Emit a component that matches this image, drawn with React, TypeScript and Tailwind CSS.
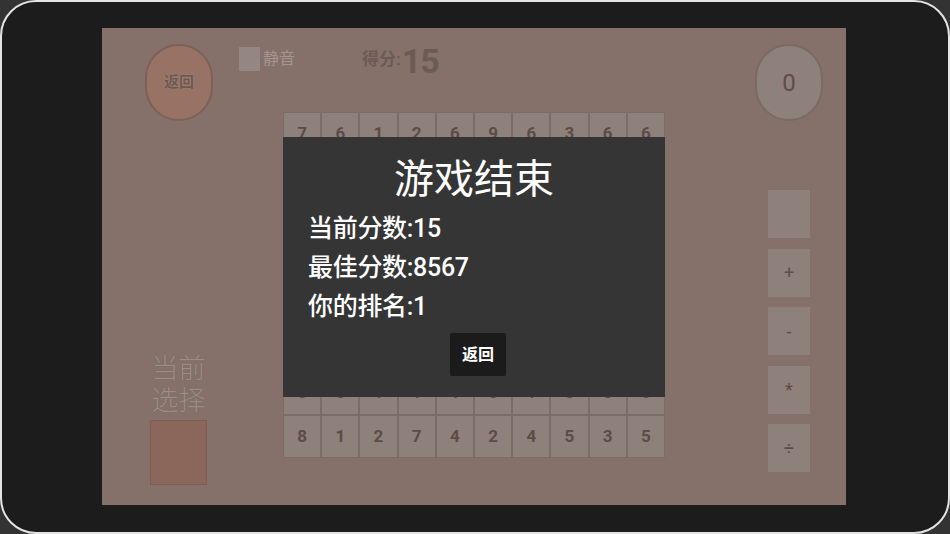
import React from "react";

// number board: 8 rows x 10 cols; rows under the result dialog are left blank
const board: (number | null)[][] = [
  [7, 6, 1, 2, 6, 9, 6, 3, 6, 6],
  Array(10).fill(null),
  Array(10).fill(null),
  Array(10).fill(null),
  Array(10).fill(null),
  Array(10).fill(null),
  [6, 6, 1, 1, 1, 6, 1, 6, 6, 6],
  [8, 1, 2, 7, 4, 2, 4, 5, 3, 5],
];

const ops = ["", "+", "-", "*", "÷"];

const stats = [
  { label: "当前分数", value: "15" },
  { label: "最佳分数", value: "8567" },
  { label: "你的排名", value: "1" },
];

function Tile({ n }: { n: number | null }) {
  return (
    <div className="flex items-center justify-center border border-[#7c6c66] bg-[#8e807b] text-[17px] font-bold text-[#5c4c46]">
      {n}
    </div>
  );
}

function ResultDialog() {
  return (
    <div className="absolute left-[181px] top-[109px] flex h-[260px] w-[382px] flex-col bg-[#353535] text-white">
      <p className="mt-[19px] text-center text-[40px] leading-[48px] font-normal">游戏结束</p>
      <div className="mt-[5px] flex flex-col pl-[25px]">
        {stats.map((s) => (
          <p key={s.label} className="text-[25px] leading-[39px] font-medium tracking-[-0.3px]">
            {s.label}:{s.value}
          </p>
        ))}
      </div>
      <div className="mt-[7px] flex justify-center pl-[8px]">
        <button
          type="button"
          className="h-[43px] w-[56px] rounded-[2px] bg-[#1b1b1b] text-[16px] font-bold text-white"
        >
          返回
        </button>
      </div>
    </div>
  );
}

export default function App() {
  return (
    <div className="h-[534px] w-[950px] bg-[#333333] font-['Roboto','Noto_Sans_CJK_SC',sans-serif]">
      <div className="h-full rounded-[36px] border-2 border-[#e4e4e4] bg-[#1c1c1c] pl-[100px] pt-[26px]">
        <div className="relative flex h-[477px] w-[744px] flex-col bg-[#857169]">
          {/* top bar */}
          <div className="flex items-start pl-[43px] pr-[23px] pt-[16px]">
            <button
              type="button"
              className="flex h-[77px] w-[68px] items-center justify-center rounded-full border-2 border-[#7c6157] bg-[#987365] text-[15px] font-bold text-[#6b5850] [text-shadow:0_0_1px_#b39c92]"
            >
              返回
            </button>
            <div className="ml-[26px] mt-[3px] flex items-center gap-[3px]">
              <span className="h-[24px] w-[21px] bg-[#948682]" />
              <span className="text-[16px] font-normal text-[#a3958f]">静音</span>
            </div>
            <div className="ml-[67px] flex items-start text-[#6b5b55]">
              <span className="mt-[7px] text-[17px] leading-none font-bold">得分:</span>
              <span className="ml-[1px] text-[34px] leading-none font-bold tracking-[-1px]">15</span>
            </div>
            <div className="ml-auto flex h-[77px] w-[68px] items-center justify-center rounded-full border-2 border-[#7a6a64] bg-[#8e807b] text-[24px] text-[#5e4d47]">
              0
            </div>
          </div>

          {/* play area */}
          <div className="-mt-[9px] flex">
            <div className="flex w-[181px] flex-col items-start pl-[48px] pt-[241px]">
              <p className="w-[57px] text-center text-[27px] leading-[32px] font-light text-[#9c8d87] [text-shadow:0_0_1px_#6f5f59]">
                当前
                <br />
                选择
              </p>
              <div className="mt-[3px] h-[65px] w-[57px] border border-[#7f5d52] bg-[#8b665a]" />
            </div>

            <div className="grid w-[382px] grid-cols-10 auto-rows-[43.25px]">
              {board.map((row, r) => row.map((n, c) => <Tile key={`${r}-${c}`} n={n} />))}
            </div>

            <div className="flex flex-col gap-[10.6px] pl-[103px] pt-[78px]">
              {ops.map((op, i) => (
                <div
                  key={i}
                  className="flex h-[48px] w-[42px] items-center justify-center bg-[#8e807b] text-[18px] text-[#5e4d47]"
                >
                  {op}
                </div>
              ))}
            </div>
          </div>

          <ResultDialog />
        </div>
      </div>
    </div>
  );
}
